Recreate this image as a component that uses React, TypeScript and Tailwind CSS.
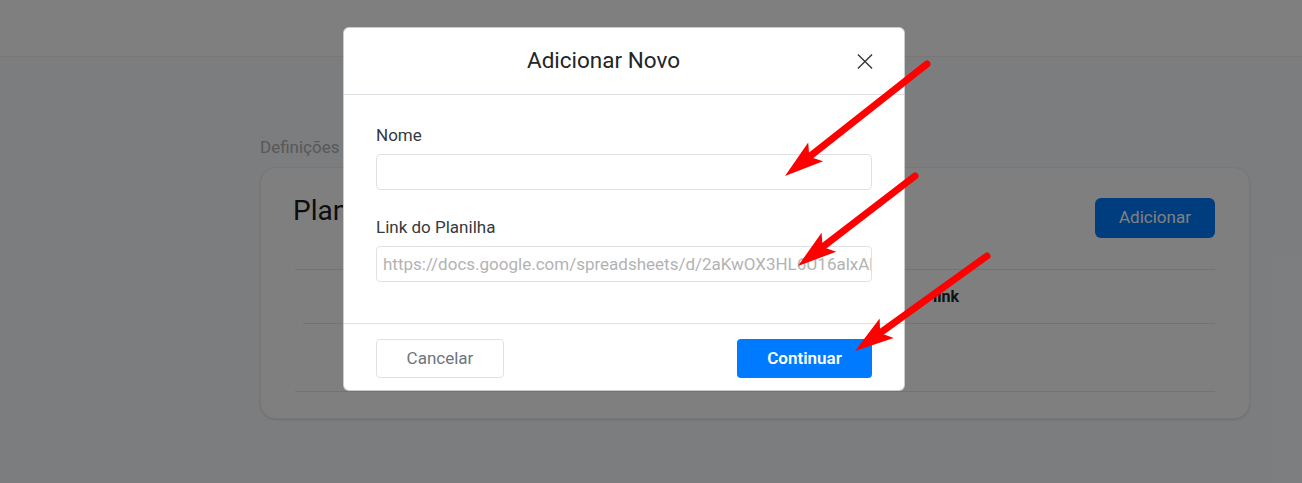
import React from "react";

type Pt = [number, number];

// red annotation arrow: shaft from start, filled head ending at tip
const Arrow = ({ start, tip }: { start: Pt; tip: Pt }) => {
  const dx = start[0] - tip[0];
  const dy = start[1] - tip[1];
  const len = Math.hypot(dx, dy);
  const ux = dx / len;
  const uy = dy / len;
  const headLen = 39;
  const half = 12;
  const base: Pt = [tip[0] + ux * headLen, tip[1] + uy * headLen];
  const notch: Pt = [tip[0] + ux * 31, tip[1] + uy * 31];
  const wingA: Pt = [base[0] - uy * half, base[1] + ux * half];
  const wingB: Pt = [base[0] + uy * half, base[1] - ux * half];
  const pts = [tip, wingA, notch, wingB].map((p) => p.join(",")).join(" ");

  return (
    <g>
      <line
        x1={start[0]}
        y1={start[1]}
        x2={notch[0]}
        y2={notch[1]}
        stroke="#ff0000"
        strokeWidth={7}
        strokeLinecap="round"
      />
      <polygon points={pts} fill="#ff0000" />
    </g>
  );
};

const Field = ({
  label,
  placeholder,
  className,
}: {
  label: string;
  placeholder?: string;
  className?: string;
}) => (
  <div className={className}>
    <label className="mb-[7px] block text-[17px] leading-[24px] text-[#343a40]">
      {label}
    </label>
    <input
      readOnly
      placeholder={placeholder}
      className="block h-[36px] w-full rounded-[4px] border border-[#dee2e6] bg-white pl-[6px] text-[17px] text-[#212529] outline-none placeholder:text-[#b3b3b3]"
    />
  </div>
);

const App = () => {
  return (
    <div className="relative h-[483px] w-[1302px] overflow-hidden bg-[#f9fbfe] font-['Roboto','Liberation_Sans',sans-serif]">
      {/* page behind the dialog */}
      <header className="h-[57px] border-b border-[#eeeeee] bg-white" />

      <main className="ml-[260px] w-[990px] pt-[80px]">
        <div className="flex gap-4 text-[17px] leading-[20px] text-[#b0b0b0]">
          <span>Definições</span>
          <span>Planilhas</span>
        </div>

        <div className="mt-[10px] rounded-2xl border border-[#efefef] bg-white px-[34px] pb-[26px] pt-[30px] shadow-sm">
          <div className="flex items-start justify-between">
            <h3 className="-ml-[2px] -mt-[4px] text-[28px] leading-[34px] text-[#1a1a1a]">
              Planilhas
            </h3>
            <button className="h-10 w-[120px] rounded-md bg-[#007bff] text-[17px] text-white">
              Adicionar
            </button>
          </div>

          <div className="mt-[31px] border-t border-[#e6e6e6]">
            <div className="flex h-[53px] items-center text-[16px] font-bold text-[#212529]">
              <span className="ml-[80px] w-[558px]">Nome</span>
              <span>link</span>
            </div>
            <div className="ml-2 h-[68px] border-t border-[#e6e6e6]" />
            <div className="border-t border-[#e6e6e6]" />
          </div>
        </div>
      </main>

      {/* backdrop */}
      <div className="absolute inset-0 bg-black/50" />

      {/* dialog */}
      <div className="absolute left-[343px] top-[27px] w-[562px] rounded-md border border-black/20 bg-white">
        <div className="flex h-[67px] items-center border-b border-[#dee2e6] pl-[32px]">
          <h5 className="-mt-[2px] w-[455px] text-center text-[22.5px] leading-[28px] text-[#212529]">
            Adicionar Novo
          </h5>
          <button className="ml-[26px] flex h-4 w-4 items-center justify-center">
            <svg width="17" height="17" viewBox="0 0 17 17">
              <path
                d="M1 1 L16 16 M16 1 L1 16"
                stroke="#333333"
                strokeWidth="1.4"
                fill="none"
              />
            </svg>
          </button>
        </div>

        <div className="px-[32px] pb-[41px] pt-[28px]">
          <Field label="Nome" />
          <Field
            label="Link do Planilha"
            placeholder="https://docs.google.com/spreadsheets/d/2aKwOX3HL6U16alxAbc"
            className="mt-[25px]"
          />
        </div>

        <div className="flex justify-between border-t border-[#dee2e6] px-[32px] pb-[12px] pt-[15px]">
          <button className="h-[39px] w-[128px] rounded-[4px] border border-[#dee2e6] text-[17px] text-[#6c757d]">
            Cancelar
          </button>
          <button className="h-[39px] w-[135px] rounded-[4px] bg-[#007bff] text-[17px] font-semibold text-white">
            Continuar
          </button>
        </div>
      </div>

      {/* annotations */}
      <svg
        className="pointer-events-none absolute inset-0"
        width="1302"
        height="483"
        viewBox="0 0 1302 483"
      >
        <Arrow start={[927, 64]} tip={[785, 176]} />
        <Arrow start={[915, 176]} tip={[798, 266]} />
        <Arrow start={[987, 256]} tip={[855, 351]} />
      </svg>
    </div>
  );
};

export default App;
